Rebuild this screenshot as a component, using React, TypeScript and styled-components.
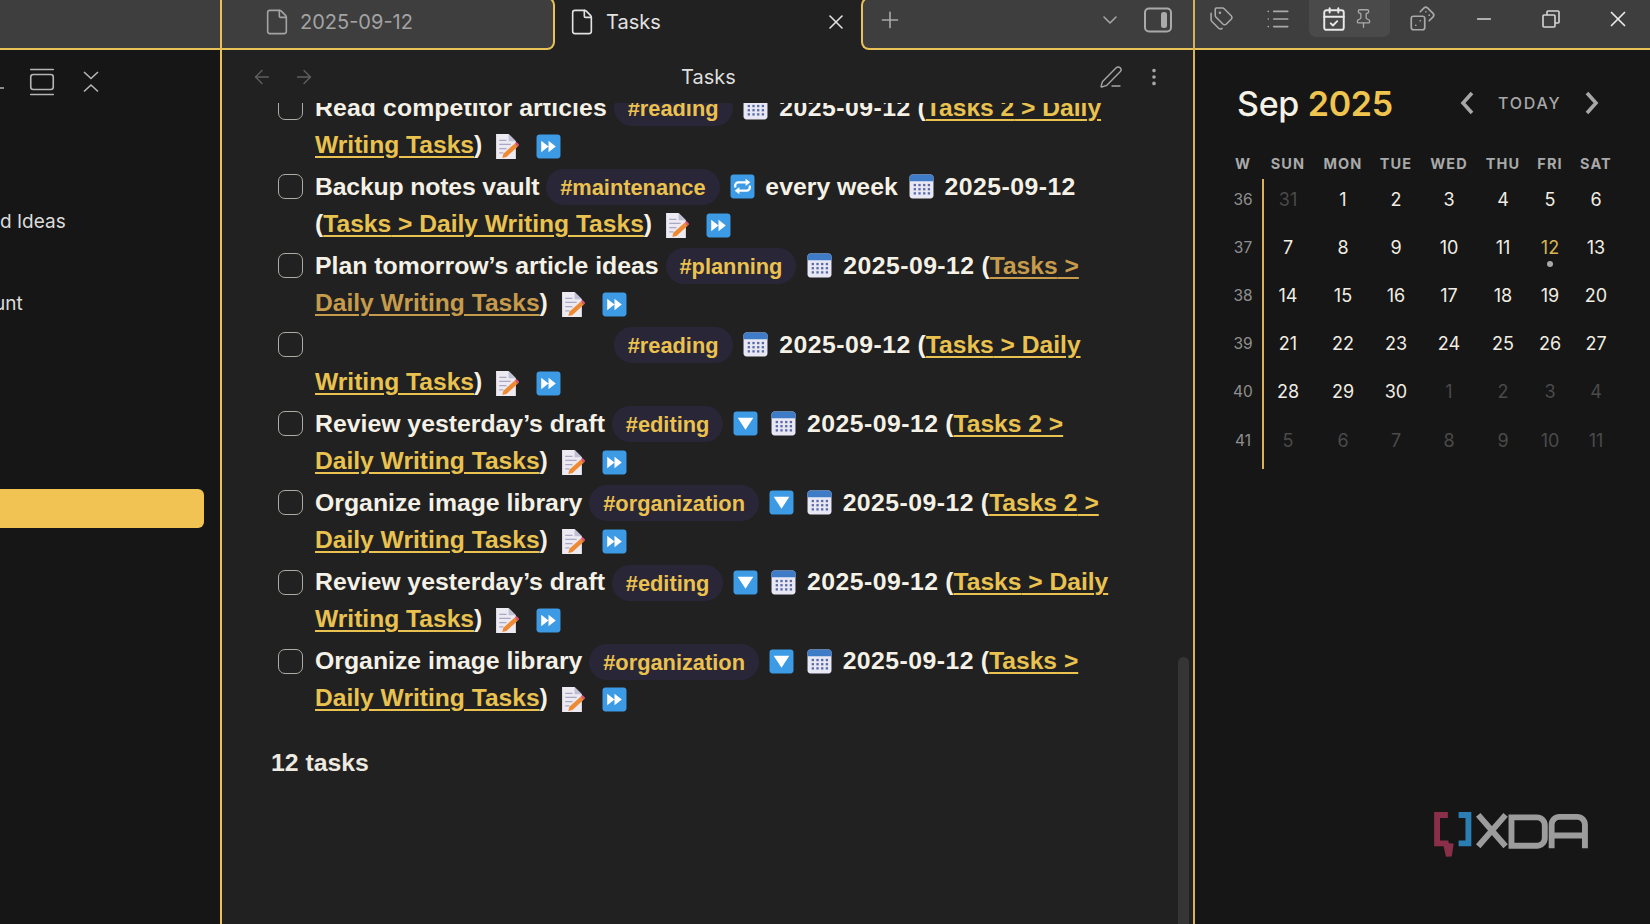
import React from "react";
import styled, { createGlobalStyle } from "styled-components";
import {
  ArrowLeft, ArrowRight, ChevronDown, CalendarCheck, Dices,
  EllipsisVertical, File, GalleryVertical, List, Minus, PenLine, Pin, Plus, Tags, X,
} from "lucide-react";

const YELLOW = "#e9c257";

const Global = createGlobalStyle`
  html, body { margin: 0; padding: 0; background: #161616; }
  body { width: 1650px; height: 924px; overflow: hidden; font-family: Inter, "Liberation Sans", sans-serif; }
`;

const Page = styled.div`
  position: relative;
  display: grid;
  grid-template-columns: 220px 975px 455px;
  width: 1650px;
  height: 924px;
  overflow: hidden;
`;

const Column = styled.div<{ $bg: string; $lined?: boolean }>`
  display: flex;
  flex-direction: column;
  min-width: 0;
  height: 924px;
  background: ${(p) => p.$bg};
  ${(p) => (p.$lined ? `border-left: 2px solid ${YELLOW}; border-right: 2px solid #d9b158; box-sizing: border-box;` : "")}
`;

const Bar = styled.div`
  flex: none;
  height: 50px;
  box-sizing: border-box;
  background: #3e3e3e;
  border-bottom: 2px solid ${YELLOW};
`;

const RightBar = styled(Bar)`
  display: flex;
  align-items: flex-start;
`;

const BarIcon = styled.span<{ $w: number; $c?: string }>`
  flex: none;
  width: ${(p) => p.$w}px;
  height: 37px;
  display: flex;
  align-items: center;
  justify-content: center;
  color: ${(p) => p.$c || "#a9a9a9"};
`;

const ActiveGroup = styled.div`
  flex: none;
  width: 81px;
  height: 37px;
  padding: 0 16px 0 12px;
  box-sizing: border-box;
  display: flex;
  align-items: center;
  justify-content: space-between;
  background: #4a4a4a;
  border-radius: 0 0 7px 7px;
`;

const SideTools = styled.div`
  height: 62px;
  padding-top: 2px;
  box-sizing: border-box;
  display: flex;
  align-items: center;
  justify-content: flex-end;
  padding-right: 121px;
  color: #b5b5b5;
  position: relative;
`;

const SideCut = styled.span`
  position: absolute;
  left: 0;
  top: 37px;
  width: 4px;
  height: 2px;
  background: #8b8b8b;
`;

const SideToolsIcons = styled.div`
  display: flex;
  gap: 26px;
  align-items: center;
`;

const SideList = styled.div`
  display: flex;
  flex-direction: column;
  color: #dcdcdc;
  font-size: 19px;
`;

const SideItem = styled.div<{ $top: number; $shift?: number }>`
  margin-top: ${(p) => p.$top}px;
  margin-left: ${(p) => p.$shift || 0}px;
  height: 26px;
  line-height: 26px;
`;

const Selected = styled.div`
  width: 204px;
  height: 39px;
  margin-top: 172px;
  background: #f0c352;
  border-radius: 0 6px 6px 0;
`;

const TabStrip = styled.div`
  flex: none;
  height: 50px;
  display: flex;
  background: #212121;
  overflow: hidden;
`;

const TabLeft = styled.div`
  flex: none;
  width: 333px;
  height: 53px;
  margin-top: -3px;
  padding: 0 0 3px 41px;
  box-sizing: border-box;
  background: #3e3e3e;
  border: solid ${YELLOW};
  border-width: 2px 2px 2px 0;
  border-radius: 0 8px 8px 0;
  display: flex;
  align-items: center;
  gap: 9px;
  color: #a3a3a3;
  font-size: 20px;
`;

const TabActive = styled.div`
  flex: none;
  width: 306px;
  height: 50px;
  padding: 0 13px 6px 13px;
  box-sizing: border-box;
  display: flex;
  align-items: center;
  gap: 10px;
  color: #e2e2e2;
  font-size: 20px;
`;

const TabLabel = styled.span`
  flex: 1;
`;

const TabRight = styled.div`
  flex: 1;
  height: 53px;
  margin-top: -3px;
  padding: 0 20px 8px 14px;
  box-sizing: border-box;
  background: #3e3e3e;
  border: solid ${YELLOW};
  border-width: 2px 0 2px 2px;
  border-radius: 8px 0 0 8px;
  display: flex;
  align-items: center;
  color: #a9a9a9;
`;

const Spacer = styled.span`
  flex: 1;
`;

const Toggle = styled.svg`
  margin-left: 21px;
`;

const Nav = styled.div`
  flex: none;
  height: 53px;
  padding: 0 28px 0 29px;
  box-sizing: border-box;
  display: flex;
  align-items: center;
  color: #5f5f5f;
`;

const NavTitle = styled.div`
  flex: 1;
  text-align: center;
  color: #dedede;
  font-size: 20px;
  padding-left: 3px;
`;

const NavTools = styled.div`
  display: flex;
  align-items: center;
  gap: 20px;
  color: #a6a6a6;
`;

const NavArrows = styled.div`
  display: flex;
  gap: 20px;
`;

const Scroll = styled.div`
  flex: 1;
  min-height: 0;
  overflow: hidden;
  position: relative;
`;

const Thumb = styled.div`
  position: absolute;
  left: 956px;
  top: 554px;
  bottom: -10px;
  width: 11px;
  border-radius: 6px 6px 0 0;
  background: #353535;
`;

const Tasks = styled.div`
  margin-top: -13.5px;
  padding-left: 56px;
  width: 895px;
  box-sizing: border-box;
`;

const Task = styled.div`
  display: flex;
  gap: 12px;
  height: 74px;
  margin-bottom: 5.1px;
`;

const Box = styled.span`
  flex: none;
  width: 25px;
  height: 25px;
  margin-top: 5.5px;
  box-sizing: border-box;
  border: 1.7px solid #aeaba2;
  border-radius: 7px;
`;

const Body = styled.div`
  font-family: "Liberation Sans", Arial, sans-serif;
  font-weight: 700;
  font-size: 24.8px;
  line-height: 36px;
  color: #f5f1e6;
`;

const Name = styled.span<{ $hide?: boolean; $track?: number }>`
  color: ${(p) => (p.$hide ? "transparent" : "inherit")};
  letter-spacing: ${(p) => p.$track || 0}px;
`;

const Tag = styled.span`
  background: #292638;
  color: #ecc24f;
  font-size: 21.8px;
  padding: 5.5px 14px;
  border-radius: 18px;
`;

const DateText = styled.span`
  letter-spacing: 0.45px;
`;

const Link = styled.span<{ $dim?: boolean }>`
  color: ${(p) => (p.$dim ? "#c79b4c" : "#e9c24f")};
  font-size: 24.6px;
  text-decoration: underline;
  text-underline-offset: 3px;
  text-decoration-thickness: 2px;
`;

const Glyph = styled.svg<{ $l?: number; $r?: number; $drop?: number }>`
  width: 25px;
  height: 25px;
  vertical-align: ${(p) => p.$drop ?? -4.5}px;
  margin: 0 ${(p) => p.$r ?? 5}px 0 ${(p) => p.$l ?? 5}px;
`;

const Count = styled.div`
  margin: 27px 0 0 49px;
  font-family: "Liberation Sans", Arial, sans-serif;
  font-weight: 700;
  font-size: 24.8px;
  line-height: 37px;
  color: #eeeae0;
`;

const CalHead = styled.div`
  display: flex;
  align-items: center;
  height: 62px;
  margin-top: 22px;
  padding-left: 42px;
`;

const Month = styled.div`
  width: 223px;
  font-size: 34px;
  font-weight: 500;
  color: #f5f1e6;
  letter-spacing: -0.3px;
`;

const Year = styled.span`
  color: #efc44f;
  font-weight: 600;
`;

const Today = styled.div`
  display: flex;
  align-items: center;
  color: #a7a7a7;
  gap: 24px;
  font-size: 16px;
  font-weight: 500;
  letter-spacing: 1.8px;
`;

const Chevron = styled.svg`
  flex: none;
  width: 14px;
  height: 24px;
  fill: none;
  stroke: #a7a7a7;
  stroke-width: 3.6;
`;

const HeadRow = styled.div`
  margin: 14.5px 0 0 28px;
  display: grid;
  grid-template-columns: 40px 50px 60px 46px 60px 48px 46px 46px;
`;

const Head = styled.div`
  height: 30px;
  display: flex;
  align-items: center;
  justify-content: center;
  color: #a9a9a9;
  font-size: 14.5px;
  font-weight: 700;
  letter-spacing: 1.1px;
`;

const CalGrid = styled.div`
  margin: -3.5px 0 0 28px;
  display: grid;
  grid-template-columns: 40px 50px 60px 46px 60px 48px 46px 46px;
  grid-auto-rows: 48.2px;
  position: relative;

  &::before {
    content: "";
    position: absolute;
    left: 39px;
    top: 4px;
    bottom: -5px;
    width: 2px;
    background: #d9b158;
  }
`;

const Week = styled.div`
  display: flex;
  align-items: center;
  justify-content: center;
  color: #8f8f8f;
  font-size: 15.5px;
`;

const Day = styled.div<{ $dim?: boolean; $today?: boolean }>`
  position: relative;
  display: flex;
  align-items: center;
  justify-content: center;
  font-size: 18px;
  color: ${(p) => (p.$dim ? "#4a4a4a" : p.$today ? "#d9b553" : "#f1ede3")};
`;

const Dot = styled.span`
  position: absolute;
  left: 50%;
  bottom: 4px;
  width: 6px;
  height: 6px;
  margin-left: -3px;
  border-radius: 50%;
  background: #a9a9a9;
`;

const Water = styled.svg`
  position: absolute;
  left: 1434px;
  top: 812px;
  width: 154px;
  height: 47px;
`;

const Calendar = () => (
  <Glyph viewBox="0 0 24 24" $l={4} $r={4}>
    <rect x="0.5" y="0.5" width="23" height="23" rx="3" fill="#e8e7f4" />
    <path d="M.5 7V3.500a3 3 0 0 1 3-3h17a3 3 0 0 1 3 3V7z" fill="#3f7cc8" />
    {[5.5, 10, 14.5, 19].map((x) =>
      [10.5, 14.5, 18.5].map((y) => <rect key={`${x}${y}`} x={x - 1} y={y - 1} width="2.2" height="2.2" fill="#5a6aa8" />)
    )}
  </Glyph>
);

const Memo = () => (
  <Glyph viewBox="0 0 24 24" $drop={-6}>
    <path d="M2 0h12l7 7v17H2z" fill="#eeeaf2" />
    <path d="M14 0l7 7h-7z" fill="#bfc0d6" />
    <path d="M5 6h7M5 10h11M5 14h7M5 18h4" stroke="#a9a9c6" strokeWidth="1.2" />
    <path d="M9 19l11-10 3 3-11 10-4 1z" fill="#ee8a34" />
    <path d="M20 9l1.600-1.400 3 3L23 12z" fill="#e2557a" />
  </Glyph>
);

const Blue = ({ children, l, r, drop }: { children: React.ReactNode; l?: number; r?: number; drop?: number }) => (
  <Glyph viewBox="0 0 24 24" $l={l} $r={r} $drop={drop}>
    <rect x="0.5" y="0.5" width="23" height="23" rx="3" fill="#3d9ae4" />
    {children}
  </Glyph>
);

const Forward = () => (
  <Blue drop={-6}>
    <path d="M5 6.500l7 5.500-7 5.500zM12 6.500l7 5.500-7 5.500z" fill="#fff" />
  </Blue>
);

const Down = () => (
  <Blue l={3} r={2}>
    <path d="M4.500 6.500h15L12 18z" fill="#fff" />
  </Blue>
);

const Repeat = () => (
  <Blue l={4} r={3}>
    <path d="M5 13v-2a3 3 0 0 1 3-3h9M19 11v2a3 3 0 0 1-3 3H7" fill="none" stroke="#fff" strokeWidth="2.2" />
    <path d="M15 4.500l4.500 3.500-4.500 3.500zM9 12.500L4.500 16 9 19.500z" fill="#fff" />
  </Blue>
);

const Tail = ({ path, dim }: { path: string; dim?: boolean }) => (
  <>
    {" "}
    <Calendar /> <DateText>2025-09-12</DateText> (<Link $dim={dim}>{path} &gt; Daily Writing Tasks</Link>) <Memo /> <Forward />
  </>
);

type Row = {
  name: string;
  tag: string;
  path: string;
  flag?: "down";
  dim?: boolean;
  hide?: boolean;
  every?: boolean;
  track?: number;
};

const rows: Row[] = [
  { name: "Read competitor articles", tag: "#reading", path: "Tasks 2", track: 0.1 },
  { name: "Backup notes vault", tag: "#maintenance", path: "Tasks", every: true, track: -0.17 },
  { name: "Plan tomorrow’s article ideas", tag: "#planning", path: "Tasks", dim: true },
  { name: "Read competitor articles", tag: "#reading", path: "Tasks", hide: true, track: 0.1 },
  { name: "Review yesterday’s draft", tag: "#editing", path: "Tasks 2", flag: "down" },
  { name: "Organize image library", tag: "#organization", path: "Tasks 2", flag: "down" },
  { name: "Review yesterday’s draft", tag: "#editing", path: "Tasks", flag: "down" },
  { name: "Organize image library", tag: "#organization", path: "Tasks", flag: "down" },
];

const weeks: { n: number; days: number[] }[] = [
  { n: 36, days: [31, 1, 2, 3, 4, 5, 6] },
  { n: 37, days: [7, 8, 9, 10, 11, 12, 13] },
  { n: 38, days: [14, 15, 16, 17, 18, 19, 20] },
  { n: 39, days: [21, 22, 23, 24, 25, 26, 27] },
  { n: 40, days: [28, 29, 30, 1, 2, 3, 4] },
  { n: 41, days: [5, 6, 7, 8, 9, 10, 11] },
];

const isDim = (w: number, d: number) => (w === 36 && d === 31) || (w === 40 && d < 10) || w === 41;

export default function App() {
  return (
    <Page>
      <Global />
      <Column $bg="#161616">
        <Bar />
        <SideTools>
          <SideCut />
          <SideToolsIcons>
            <GalleryVertical size={30} strokeWidth={1.3} />
            <svg width="16" height="22" viewBox="0 0 16 22" fill="none" stroke="#b5b5b5" strokeWidth="1.6">
              <path d="M1 1l7 6.500 7-6.500M1 20.500l7-6.500 7 6.500" />
            </svg>
          </SideToolsIcons>
        </SideTools>
        <SideList>
          <SideItem $top={97}>d Ideas</SideItem>
          <SideItem $top={56} $shift={-6}>unt</SideItem>
          <Selected />
        </SideList>
      </Column>

      <Column $bg="#212121" $lined>
        <TabStrip>
          <TabLeft>
            <File size={28} strokeWidth={1.4} />
            2025-09-12
          </TabLeft>
          <TabActive>
            <File size={28} strokeWidth={1.4} />
            <TabLabel>Tasks</TabLabel>
            <X size={24} strokeWidth={1.6} />
          </TabActive>
          <TabRight>
            <Plus size={26} strokeWidth={1.5} />
            <Spacer />
            <ChevronDown size={24} strokeWidth={1.5} />
            <Toggle width="30" height="26" viewBox="0 0 30 26">
              <rect x="2" y="1.5" width="26" height="23" rx="4" fill="none" stroke="#a9a9a9" strokeWidth="2" />
              <rect x="18" y="5" width="6" height="16" rx="2.5" fill="#a9a9a9" />
            </Toggle>
          </TabRight>
        </TabStrip>
        <Nav>
          <NavArrows>
            <ArrowLeft size={22} strokeWidth={1.5} />
            <ArrowRight size={22} strokeWidth={1.5} />
          </NavArrows>
          <NavTitle>Tasks</NavTitle>
          <NavTools>
            <PenLine size={24} strokeWidth={1.4} />
            <EllipsisVertical size={22} strokeWidth={2} />
          </NavTools>
        </Nav>
        <Scroll>
          <Thumb />
          <Tasks>
            {rows.map((r, i) => (
              <Task key={i}>
                <Box />
                <Body>
                  <Name $hide={r.hide} $track={r.track}>{r.name}</Name> <Tag>{r.tag}</Tag>{" "}
                  {r.flag === "down" && <Down />}
                  {r.every && (
                    <>
                      <Repeat /> every week
                    </>
                  )}
                  <Tail path={r.path} dim={r.dim} />
                </Body>
              </Task>
            ))}
          </Tasks>
          <Count>12 tasks</Count>
        </Scroll>
      </Column>

      <Column $bg="#161616">
        <RightBar>
          <BarIcon $w={52}>
            <Tags size={25} strokeWidth={1.5} />
          </BarIcon>
          <BarIcon $w={62}>
            <List size={26} strokeWidth={1.5} />
          </BarIcon>
          <ActiveGroup>
            <CalendarCheck size={26} strokeWidth={1.8} color="#e8e8e8" />
            <Pin size={21} strokeWidth={1.5} color="#a9a9a9" />
          </ActiveGroup>
          <BarIcon $w={64}>
            <Dices size={27} strokeWidth={1.5} />
          </BarIcon>
          <BarIcon $w={60}>
            <Minus size={22} strokeWidth={1.6} color="#d5d5d5" />
          </BarIcon>
          <BarIcon $w={74}>
            <svg width="18" height="18" viewBox="0 0 18 18" fill="none" stroke="#d5d5d5" strokeWidth="1.6">
              <rect x="1" y="5" width="12" height="12" rx="1" />
              <path d="M5 5V2a1 1 0 0 1 1-1h10a1 1 0 0 1 1 1v10a1 1 0 0 1-1 1h-3" />
            </svg>
          </BarIcon>
          <BarIcon $w={60}>
            <X size={26} strokeWidth={1.6} color="#e8e8e8" />
          </BarIcon>
        </RightBar>
        <CalHead>
          <Month>
            Sep <Year>2025</Year>
          </Month>
          <Today>
            <Chevron viewBox="0 0 14 24">
              <path d="M12 2L3 12l9 10" />
            </Chevron>
            TODAY
            <Chevron viewBox="0 0 14 24">
              <path d="M2 2l9 10-9 10" />
            </Chevron>
          </Today>
        </CalHead>
        <HeadRow>
          {["W", "SUN", "MON", "TUE", "WED", "THU", "FRI", "SAT"].map((h) => (
            <Head key={h}>{h}</Head>
          ))}
        </HeadRow>
        <CalGrid>
          {weeks.map((w) => (
            <React.Fragment key={w.n}>
              <Week>{w.n}</Week>
              {w.days.map((d) => (
                <Day key={d} $dim={isDim(w.n, d)} $today={w.n === 37 && d === 12}>
                  {d}
                  {w.n === 37 && d === 12 && <Dot />}
                </Day>
              ))}
            </React.Fragment>
          ))}
        </CalGrid>
      </Column>

      <Water viewBox="0 0 157 48" fill="none">
        <path d="M14 3H3v29h9l3 13 2-13" stroke="#8a2f49" strokeWidth="6" />
        <path d="M25 3h10v29H25" stroke="#2b7eb4" strokeWidth="6" />
        <path d="M45 3l28 32M73 3L45 35" stroke="#9c9c9c" strokeWidth="6" />
        <path d="M79 5.500h26a8 8 0 0 1 8 8v13a8 8 0 0 1-8 8H79z" stroke="#9c9c9c" strokeWidth="6" />
        <path d="M120 37V13a8 8 0 0 1 8-8h18a8 8 0 0 1 8 8v24M120 24h34" stroke="#9c9c9c" strokeWidth="6" />
      </Water>
    </Page>
  );
}
